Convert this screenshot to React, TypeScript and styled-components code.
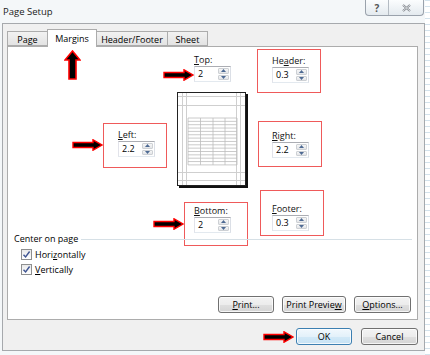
import React from "react";
import styled, { createGlobalStyle } from "styled-components";

const GlobalStyle = createGlobalStyle`
  html, body {
    margin: 0;
    padding: 0;
  }
  body {
    background: #f4f7f9;
    font-family: "Open Sans", "Liberation Sans", sans-serif;
    font-size: 9px;
    color: #000;
  }
`;

const Screen = styled.div`
  width: 430px;
  height: 355px;
  display: flex;
  overflow: hidden;
`;

const Dialog = styled.div`
  width: 425px;
  height: 355px;
  display: flex;
  flex-direction: column;
  background: #f4f7f9;
`;

const Backdrop = styled.div`
  flex: 1;
  background: repeating-linear-gradient(
    to bottom,
    #d3e2ec 0px,
    #d3e2ec 1px,
    #ffffff 1px,
    #ffffff 6px
  );
`;

const TitleBar = styled.div`
  height: 23px;
  display: flex;
  align-items: flex-start;
`;

const Title = styled.div`
  padding: 6px 0 0 3px;
  line-height: 12px;
  font-size: 9.5px;
  color: #1a1a1a;
`;

const CaptionButtons = styled.div`
  margin-left: auto;
  margin-right: 1px;
  height: 15px;
  display: flex;
  border: 1px solid #9aa2ac;
  border-top: none;
  border-radius: 0 0 4px 4px;
  background: linear-gradient(#fbfdfe, #e4eaef);
  overflow: hidden;
`;

const CaptionButton = styled.div<{ $w: number }>`
  width: ${(p) => p.$w}px;
  display: flex;
  align-items: center;
  justify-content: center;
  color: #555;
  font-size: 10px;
  font-weight: 700;
  & + & {
    border-left: 1px solid #b4bbc3;
  }
`;

const Client = styled.div`
  margin-left: 2px;
  height: 328px;
  box-sizing: border-box;
  border: 1px solid #a6a9ad;
  background: #f0f0f0;
  padding: 4px 6px 0 4px;
  display: flex;
  flex-direction: column;
`;

const Tabs = styled.div`
  height: 18px;
  display: flex;
  align-items: flex-end;
  padding-left: 1px;
`;

const Tab = styled.div<{ $w: number; $active?: boolean }>`
  width: ${(p) => p.$w}px;
  height: ${(p) => (p.$active ? 18 : 15)}px;
  box-sizing: border-box;
  display: flex;
  align-items: center;
  justify-content: center;
  border: 1px solid #acacac;
  border-bottom: ${(p) => (p.$active ? "none" : "1px solid #acacac")};
  margin-left: -1px;
  margin-bottom: ${(p) => (p.$active ? -1 : 0)}px;
  padding-top: ${(p) => (p.$active ? 0 : 1)}px;
  background: ${(p) =>
    p.$active ? "#ffffff" : "linear-gradient(#f2f2f2, #e3e3e3)"};
  position: relative;
  z-index: ${(p) => (p.$active ? 1 : 0)};
`;

const Panel = styled.div`
  height: 274px;
  box-sizing: border-box;
  border: 1px solid #acacac;
  background: #ffffff;
  display: flex;
  flex-direction: column;
`;

const MarginsGrid = styled.div`
  display: grid;
  grid-template-columns: 113px 80px 66px;
  grid-template-rows: 43px 98px 43px;
  margin: 2px 0 0 56px;
`;

const Cell = styled.div<{
  $col: string;
  $row: number;
  $ml?: number;
  $mt?: number;
}>`
  grid-column: ${(p) => p.$col};
  grid-row: ${(p) => p.$row};
  margin-left: ${(p) => p.$ml ?? 0}px;
  margin-top: ${(p) => p.$mt ?? 0}px;
  display: flex;
  align-items: flex-start;
  align-self: start;
  justify-self: start;
`;

const ArrowSlot = styled.div<{ $mt: number }>`
  margin-top: ${(p) => p.$mt}px;
  display: flex;
`;

const Highlight = styled.div<{ $w: number; $h: number; $pt: number; $pl: number }>`
  width: ${(p) => p.$w}px;
  height: ${(p) => p.$h}px;
  box-sizing: border-box;
  border: 1px solid #ef5a5a;
  padding: ${(p) => p.$pt}px 0 0 ${(p) => p.$pl}px;
`;

const Field = styled.div`
  display: flex;
  flex-direction: column;
  gap: 1px;
`;

const Label = styled.div`
  line-height: 11px;
  color: #111;
`;

const SpinBox = styled.div`
  width: 37px;
  height: 16px;
  box-sizing: border-box;
  display: flex;
  border: 1px solid #abadb3;
  border-color: #abadb3 #dbdfe6 #e3e9ef #e2e3ea;
  background: #fff;
`;

const SpinText = styled.div`
  flex: 1;
  padding-left: 3px;
  line-height: 14px;
`;

const SpinButtons = styled.div`
  width: 11px;
  display: flex;
  flex-direction: column;
  padding: 1px 1px 1px 0;
  gap: 1px;
`;

const SpinButton = styled.div`
  flex: 1;
  display: flex;
  align-items: center;
  justify-content: center;
  border: 1px solid #cdd0d4;
  border-radius: 1px;
  background: linear-gradient(#f6f6f6, #e3e5e8);
`;

const PageSheet = styled.div`
  width: 71px;
  height: 96px;
  display: flex;
`;

const CenterSection = styled.div`
  display: flex;
  flex-direction: column;
  padding-left: 6px;
`;

const SectionTitle = styled.div`
  display: flex;
  align-items: center;
  line-height: 11px;
`;

const SectionRule = styled.div`
  flex: 1;
  height: 1px;
  background: #d6e0e6;
  margin: 1px 5px 0 3px;
`;

const CheckRow = styled.div<{ $mt: number }>`
  display: flex;
  align-items: center;
  gap: 3px;
  margin: ${(p) => p.$mt}px 0 0 7px;
  height: 13px;
`;

const CheckBox = styled.div`
  width: 11px;
  height: 11px;
  box-sizing: border-box;
  border: 1px solid #8e8f8f;
  background: linear-gradient(#e9e9e9, #ffffff);
  display: flex;
  align-items: center;
  justify-content: center;
`;

const PanelButtons = styled.div`
  margin-top: auto;
  padding: 0 6px 6px 0;
  display: flex;
  justify-content: flex-end;
  gap: 8px;
`;

const Button = styled.button<{ $w: number; $default?: boolean }>`
  width: ${(p) => p.$w}px;
  height: 17px;
  padding: 0;
  font-family: inherit;
  font-size: 9px;
  color: #000;
  border: 1px solid ${(p) => (p.$default ? "#3c7fb1" : "#707070")};
  border-radius: 3px;
  background: ${(p) =>
    p.$default
      ? "linear-gradient(#f1f8fd 0%, #e3f1fa 50%, #d2e9f7 51%, #c6e2f4 100%)"
      : "linear-gradient(#f3f3f3 0%, #ececec 50%, #dfdfdf 51%, #d4d4d4 100%)"};
  box-shadow: inset 0 0 0 1px rgba(255, 255, 255, 0.75);
`;

const Footer = styled.div`
  margin-top: 8px;
  display: flex;
  justify-content: flex-end;
  align-items: center;
  gap: 9px;
`;

const OkGroup = styled.div`
  display: flex;
  align-items: center;
  gap: 2px;
`;

const RightArrow = () => (
  <svg width="31" height="12" viewBox="0 0 31 12">
    <polygon
      points="1,3.5 21,3.5 21,0.8 30,6 21,11.2 21,8.5 1,8.5"
      fill="#000"
      stroke="#f00"
      strokeWidth="1.4"
    />
  </svg>
);

const UpArrow = () => (
  <svg width="17" height="30" viewBox="0 0 17 30">
    <polygon
      points="5,29 5,10 1,10 8.5,1 16,10 12,10 12,29"
      fill="#000"
      stroke="#f00"
      strokeWidth="1.6"
    />
  </svg>
);

const Spin = ({ value }: { value: string }) => (
  <SpinBox>
    <SpinText>{value}</SpinText>
    <SpinButtons>
      <SpinButton>
        <svg width="5" height="3" viewBox="0 0 5 3">
          <polygon points="0,3 2.5,0 5,3" fill="#4e6a93" />
        </svg>
      </SpinButton>
      <SpinButton>
        <svg width="5" height="3" viewBox="0 0 5 3">
          <polygon points="0,0 2.5,3 5,0" fill="#4e6a93" />
        </svg>
      </SpinButton>
    </SpinButtons>
  </SpinBox>
);

const MarginField = ({ label, value }: { label: React.ReactNode; value: string }) => (
  <Field>
    <Label>{label}</Label>
    <Spin value={value} />
  </Field>
);

const Check = () => (
  <CheckBox>
    <svg width="9" height="9" viewBox="0 0 9 9">
      <path d="M1.5 4.8 L3.6 7 L7.6 1.5" fill="none" stroke="#3f5592" strokeWidth="1.4" />
    </svg>
  </CheckBox>
);

const PagePreview = () => {
  const rows = Array.from({ length: 15 }, (_, i) => 26 + i * 3.35);
  const cols = [11, 23.5, 36, 48, 60];
  return (
    <PageSheet>
      <svg width="71" height="96" viewBox="0 0 71 96">
        <rect x="2" y="2" width="69" height="94" fill="#111" />
        <rect x="0.5" y="0.5" width="68" height="93" fill="#fff" stroke="#222" />
        {[5.5, 9.5, 59.5, 63.5].map((x) => (
          <line key={"v" + x} x1={x} y1="1" x2={x} y2="93" stroke="#cfcfcf" />
        ))}
        {[4.5, 13.5, 80.5, 88.5].map((y) => (
          <line key={"h" + y} x1="1" y1={y} x2="68" y2={y} stroke="#cfcfcf" />
        ))}
        {rows.map((y) => (
          <line key={"r" + y} x1="11" y1={y} x2="60" y2={y} stroke="#bdbdbd" strokeWidth="0.8" />
        ))}
        {cols.map((x) => (
          <line key={"c" + x} x1={x} y1="26" x2={x} y2={rows[rows.length - 1]} stroke="#bdbdbd" strokeWidth="0.8" />
        ))}
      </svg>
    </PageSheet>
  );
};

export default function App() {
  return (
    <Screen>
      <GlobalStyle />
      <Dialog>
        <TitleBar>
          <Title>Page Setup</Title>
          <CaptionButtons>
            <CaptionButton $w={22}>?</CaptionButton>
            <CaptionButton $w={34}>
              <svg width="9" height="8" viewBox="0 0 9 8">
                <path d="M1 1 L8 7 M8 1 L1 7" stroke="#7a7f86" strokeWidth="2" />
                <path d="M1 1 L8 7 M8 1 L1 7" stroke="#f3f5f7" strokeWidth="0.8" />
              </svg>
            </CaptionButton>
          </CaptionButtons>
        </TitleBar>
        <Client>
          <Tabs>
            <Tab $w={41}>Page</Tab>
            <Tab $w={50} $active>
              Margins
            </Tab>
            <Tab $w={72}>Header/Footer</Tab>
            <Tab $w={41}>Sheet</Tab>
          </Tabs>
          <Panel>
            <MarginsGrid>
              <Cell $col="1" $row={1} $mt={1}>
                <UpArrow />
              </Cell>
              <Cell $col="1 / 3" $row={1} $ml={99} $mt={5}>
                <ArrowSlot $mt={15}>
                  <RightArrow />
                </ArrowSlot>
                <MarginField label={<><u>T</u>op:</>} value="2" />
              </Cell>
              <Cell $col="3" $row={1}>
                <Highlight $w={64} $h={44} $pt={5} $pl={14}>
                  <MarginField label={<>He<u>a</u>der:</>} value="0.3" />
                </Highlight>
              </Cell>

              <Cell $col="1" $row={2} $ml={8} $mt={31}>
                <ArrowSlot $mt={16}>
                  <RightArrow />
                </ArrowSlot>
                <Highlight $w={64} $h={45} $pt={5} $pl={14}>
                  <MarginField label={<><u>L</u>eft:</>} value="2.2" />
                </Highlight>
              </Cell>
              <Cell $col="2" $row={2}>
                <PagePreview />
              </Cell>
              <Cell $col="3" $row={2} $ml={1} $mt={29}>
                <Highlight $w={64} $h={46} $pt={8} $pl={13}>
                  <MarginField label={<><u>R</u>ight:</>} value="2.2" />
                </Highlight>
              </Cell>

              <Cell $col="1 / 3" $row={3} $ml={89} $mt={12}>
                <ArrowSlot $mt={16}>
                  <RightArrow />
                </ArrowSlot>
                <Highlight $w={64} $h={44} $pt={2} $pl={9}>
                  <MarginField label={<><u>B</u>ottom:</>} value="2" />
                </Highlight>
              </Cell>
              <Cell $col="3" $row={3} $ml={3}>
                <Highlight $w={64} $h={46} $pt={12} $pl={11}>
                  <MarginField label={<><u>F</u>ooter:</>} value="0.3" />
                </Highlight>
              </Cell>
            </MarginsGrid>

            <CenterSection>
              <SectionTitle>
                Center on page
                <SectionRule />
              </SectionTitle>
              <CheckRow $mt={4}>
                <Check />
                <span>
                  Hori<u>z</u>ontally
                </span>
              </CheckRow>
              <CheckRow $mt={2}>
                <Check />
                <span>
                  <u>V</u>ertically
                </span>
              </CheckRow>
            </CenterSection>

            <PanelButtons>
              <Button $w={56}>
                <u>P</u>rint...
              </Button>
              <Button $w={64}>
                Print Previe<u>w</u>
              </Button>
              <Button $w={57}>
                <u>O</u>ptions...
              </Button>
            </PanelButtons>
          </Panel>
          <Footer>
            <OkGroup>
              <RightArrow />
              <Button $w={56} $default>
                OK
              </Button>
            </OkGroup>
            <Button $w={57}>Cancel</Button>
          </Footer>
        </Client>
      </Dialog>
      <Backdrop />
    </Screen>
  );
}
